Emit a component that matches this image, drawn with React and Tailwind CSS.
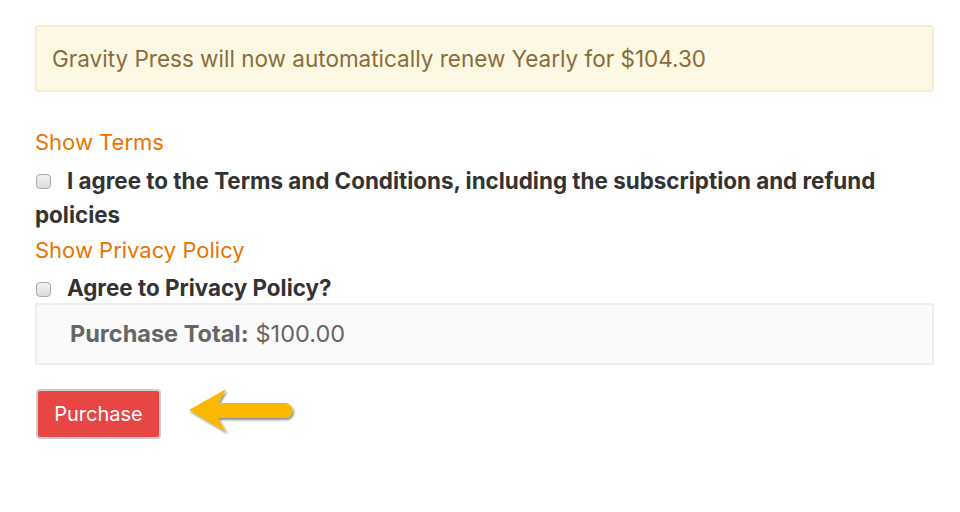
import React from "react";

function Checkbox() {
  return (
    <span className="inline-block w-[15px] h-[15px] rounded-[4px] border border-[#a9a9a9] bg-gradient-to-b from-[#f2f2f2] to-[#dcdcdc] shrink-0" />
  );
}

function Arrow() {
  return (
    <svg width="120" height="56" viewBox="0 0 120 56" className="overflow-visible">
      <defs>
        <filter id="sh" x="-20%" y="-30%" width="140%" height="160%">
          <feDropShadow dx="1.5" dy="2" stdDeviation="1.2" floodColor="#000" floodOpacity="0.45" />
        </filter>
      </defs>
      <path
        d="M8 25 L45 4 L37 18 L104 18 A7.5 7.5 0 0 1 104 33 L37 33 L45 47 Z"
        fill="#fbb800"
        filter="url(#sh)"
      />
    </svg>
  );
}

export default function App() {
  return (
    <div className="w-[960px] h-[512px] bg-white font-['Inter',sans-serif] pt-[25px] pl-[35px] pr-[26px]">
      <div className="h-[67px] border-2 border-[#faebcc] bg-[#fcf8e3] rounded-[3px] flex items-center pl-[15px] text-[#8a6d3b] text-[22.5px]">
        Gravity Press will now automatically renew Yearly for $104.30
      </div>
      <div className="mt-[33px] text-[22px] leading-[34px] text-[#e97300]">Show Terms</div>
      <div className="relative mt-[5px]">
        <div className="absolute left-[1px] top-[7px]"><Checkbox /></div>
        <div className="text-[22.4px] leading-[34px] font-bold text-[#333] indent-[32px]">
          I agree to the Terms and Conditions, including the subscription and refund policies
        </div>
      </div>
      <div className="text-[22px] leading-[34px] text-[#e97300] mt-[1px]">Show Privacy Policy</div>
      <div className="relative h-[36px]">
        <div className="absolute left-[1px] top-[12px]"><Checkbox /></div>
        <div className="pl-[32px] pt-[4px] text-[22.4px] leading-[34px] font-bold text-[#333]">Agree to Privacy Policy?</div>
      </div>
      <div className="h-[62px] border-2 border-[#eeeeee] bg-[#fafafa] flex items-center pl-[33px] text-[23.5px] text-[#666]">
        <span className="font-bold">Purchase Total:</span>
        <span className="ml-[7px]">$100.00</span>
      </div>
      <div className="mt-[21px] flex items-center">
        <button className="w-[125px] h-[50px] bg-[#e84545] border-2 border-[#cfcfcf] rounded-[4px] text-white text-[20px] ml-[1px]">
          Purchase
        </button>
        <div className="ml-[20px] -mt-[1px]">
          <Arrow />
        </div>
      </div>
    </div>
  );
}
